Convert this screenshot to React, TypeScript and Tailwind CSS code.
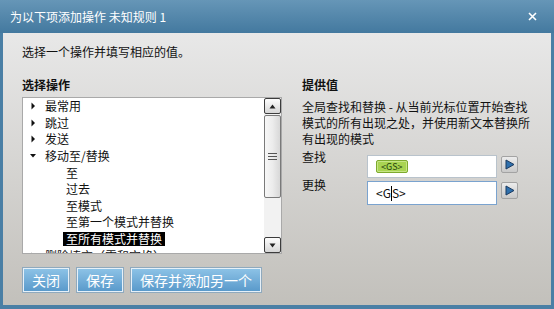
import { ReactNode } from "react";

const FONT = { fontFamily: '"Noto Sans CJK SC", "Noto Sans", sans-serif' };

type Row = { label: string; level: 0 | 1; state?: "closed" | "open"; selected?: boolean };

const ROWS: Row[] = [
    { label: "最常用", level: 0, state: "closed" },
    { label: "跳过", level: 0, state: "closed" },
    { label: "发送", level: 0, state: "closed" },
    { label: "移动至/替换", level: 0, state: "open" },
    { label: "至", level: 1 },
    { label: "过去", level: 1 },
    { label: "至模式", level: 1 },
    { label: "至第一个模式并替换", level: 1 },
    { label: "至所有模式并替换", level: 1, selected: true },
    { label: "删除填充（零和空格）", level: 0, state: "closed" },
];

function Caret({ state }: { state?: "closed" | "open" }) {
    if (state === "open") {
        return (
            <svg width="8" height="8" viewBox="0 0 8 8" className="shrink-0">
                <path d="M1 2 L7 2 L4 5.5 Z" fill="#111" />
            </svg>
        );
    }
    return (
        <svg width="8" height="8" viewBox="0 0 8 8" className="shrink-0">
            <path d="M2.5 0.5 L6 4 L2.5 7.5 Z" fill="#111" />
        </svg>
    );
}

function TreeRow({ row }: { row: Row }) {
    return (
        <div className="flex items-center h-[16.6px] text-[12px] leading-none text-[#111]">
            {row.level === 0 ? (
                <>
                    <div className="w-[6px]" />
                    <Caret state={row.state} />
                    <span className="ml-[8px] whitespace-nowrap">{row.label}</span>
                </>
            ) : (
                <span
                    className={
                        "ml-[40px] px-[3px] h-[14px] flex items-center whitespace-nowrap " +
                        (row.selected ? "bg-black text-white" : "")
                    }
                >
                    {row.label}
                </span>
            )}
        </div>
    );
}

function ScrollButton({ dir }: { dir: "up" | "down" }) {
    return (
        <div className="h-[16px] w-full flex items-center justify-center border border-[#3c3c3c] rounded-[2px] bg-gradient-to-b from-[#fdfdfd] to-[#d6d6d6]">
            <svg width="7" height="5" viewBox="0 0 7 5">
                {dir === "up" ? <path d="M0.5 4.5 L3.5 0.5 L6.5 4.5 Z" fill="#222" /> : <path d="M0.5 0.5 L6.5 0.5 L3.5 4.5 Z" fill="#222" />}
            </svg>
        </div>
    );
}

function Scrollbar() {
    return (
        <div className="w-[17px] h-full flex flex-col bg-[#f2f2f2]">
            <ScrollButton dir="up" />
            <div className="mt-[1px] h-[83px] border border-[#7a7a7a] rounded-[2px] bg-gradient-to-r from-[#f7f7f7] via-[#ececec] to-[#d8d8d8] flex flex-col items-center justify-center gap-[2px]">
                <div className="w-[9px] h-[1px] bg-[#555]" />
                <div className="w-[9px] h-[1px] bg-[#555]" />
                <div className="w-[9px] h-[1px] bg-[#555]" />
            </div>
            <div className="flex-1" />
            <ScrollButton dir="down" />
        </div>
    );
}

function DialogButton({ children, w }: { children: ReactNode; w: string }) {
    return (
        <button
            className={
                w +
                " h-[24px] text-[14px] leading-none text-white border border-[#e6f0f8] shadow-[0_0_0_1px_#8fa9bd] bg-gradient-to-b from-[#8cc2e6] to-[#5a9acb]"
            }
        >
            {children}
        </button>
    );
}

function ArrowButton() {
    return (
        <div className="w-[17px] h-[17px] flex items-center justify-center border border-[#a3a3a3] rounded-[2px] bg-gradient-to-b from-[#ececec] to-[#c9c9c9]">
            <svg width="10" height="11" viewBox="0 0 10 11">
                <path d="M1 1 L9 5.5 L1 10 Z" fill="#2f70ad" stroke="#1b3a60" strokeWidth="1" strokeLinejoin="round" />
            </svg>
        </div>
    );
}

export default function App() {
    return (
        <div className="w-[554px] h-[309px] bg-[#4a7fa5] flex flex-col overflow-hidden" style={FONT}>
            {/* title bar */}
            <div className="h-[33px] shrink-0 flex items-center justify-between pl-[10px] pr-[17px] bg-gradient-to-b from-[#6696b7] to-[#43799f]">
                <span className="text-white text-[12px] leading-none">为以下项添加操作 未知规则 1</span>
                <svg width="9" height="9" viewBox="0 0 9 9">
                    <path d="M1 1 L8 8 M8 1 L1 8" stroke="#fff" strokeWidth="1.6" />
                </svg>
            </div>

            {/* body */}
            <div className="flex-1 mx-[3px] mb-[4px] bg-gradient-to-b from-[#e8e8e8] to-[#c2c0bb] pl-[19px] pt-[11px] flex flex-col">
                <div className="text-[12px] leading-[16px] text-[#111]">选择一个操作并填写相应的值。</div>

                <div className="flex mt-[17px]">
                    {/* left column */}
                    <div className="w-[260px] shrink-0 flex flex-col">
                        <div className="text-[12px] leading-[16px] font-bold text-[#111]">选择操作</div>
                        <div className="mt-[4px] h-[157px] border border-[#a9a9a9] bg-white flex">
                            <div className="flex-1 overflow-hidden">
                                {ROWS.map((r) => (
                                    <TreeRow key={r.label} row={r} />
                                ))}
                            </div>
                            <Scrollbar />
                        </div>
                        <div className="flex gap-[8px] mt-[14px] ml-[1px]">
                            <DialogButton w="w-[46px]">关闭</DialogButton>
                            <DialogButton w="w-[46px]">保存</DialogButton>
                            <DialogButton w="w-[130px]">保存并添加另一个</DialogButton>
                        </div>
                    </div>

                    {/* right column */}
                    <div className="ml-[20px] flex flex-col text-[#111]">
                        <div className="text-[12px] leading-[16px] font-bold">提供值</div>
                        <div className="mt-[6px] text-[12px] leading-[16px] whitespace-nowrap">
                            全局查找和替换 - 从当前光标位置开始查找
                            <br />
                            模式的所有出现之处，并使用新文本替换所
                            <br />
                            有出现的模式
                        </div>

                        <div className="flex items-start mt-[2px]">
                            <div className="w-[65px] text-[12px] leading-[16px]">查找</div>
                            <div className="mt-[6px] w-[130px] h-[23px] border border-[#b9c3cc] bg-white flex items-center pl-[8px]">
                                <span className="h-[13px] px-[4px] flex items-center text-[9px] leading-none text-[#24420a] bg-[#a9d452] border border-[#7daa2e] rounded-[2px] shadow-[inset_0_0_0_1px_#c6e585]">
                                    &lt;GS&gt;
                                </span>
                            </div>
                            <div className="mt-[7px] ml-[4px]">
                                <ArrowButton />
                            </div>
                        </div>

                        <div className="flex items-start -mt-[9px]">
                            <div className="w-[65px] text-[12px] leading-[16px] mt-[8px]">更换</div>
                            <div className="mt-[12px] w-[130px] h-[24px] border border-[#7aa3cf] bg-white flex items-center pl-[8px] text-[12px] leading-none">
                                <span>&lt;G</span>
                                <span className="w-[1px] h-[15px] bg-black" />
                                <span>S&gt;</span>
                            </div>
                            <div className="mt-[13px] ml-[4px]">
                                <ArrowButton />
                            </div>
                        </div>
                    </div>
                </div>
            </div>
        </div>
    );
}
